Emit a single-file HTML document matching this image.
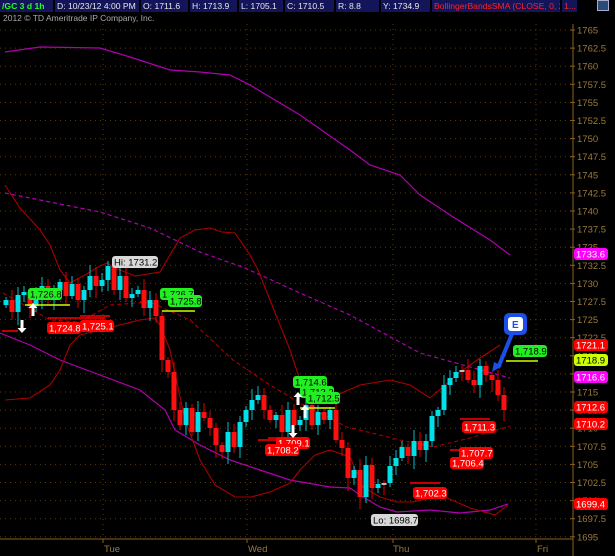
<!DOCTYPE html>
<html><head><meta charset="utf-8">
<style>
html,body{margin:0;padding:0;background:#000;width:615px;height:556px;overflow:hidden;font-family:"Liberation Sans",sans-serif;}
#hdr{position:absolute;left:0;top:0;width:615px;height:13px;background:#000;}
.c{position:absolute;top:0;height:12px;background:#14145a;color:#e6e6e6;font-size:8.6px;line-height:12px;white-space:nowrap;overflow:hidden;padding-left:2px;box-sizing:border-box;}
svg{position:absolute;left:0;top:0}
</style></head><body>
<div id="hdr">
<div class="c" style="left:0;width:53px;color:#2f2;font-weight:bold">/GC 3 d 1h</div>
<div class="c" style="left:55px;width:84px">D: 10/23/12 4:00 PM</div>
<div class="c" style="left:141px;width:47px">O: 1711.6</div>
<div class="c" style="left:190px;width:47px">H: 1713.9</div>
<div class="c" style="left:239px;width:44px">L: 1705.1</div>
<div class="c" style="left:285px;width:49px">C: 1710.5</div>
<div class="c" style="left:336px;width:43px">R: 8.8</div>
<div class="c" style="left:381px;width:49px">Y: 1734.9</div>
<div class="c" style="left:432px;width:128px;color:#f22">BollingerBandsSMA (CLOSE, 0, 25, -2.0, 2.0)</div>
<div class="c" style="left:562px;width:15px;color:#f22">1...</div>
<div class="c" style="left:597px;width:12px;height:11px;background:#2a4a7a;border:1px solid #aac"></div>
</div>
<div style="position:absolute;left:3px;top:13px;color:#aaa;font-size:8.5px">2012 © TD Ameritrade IP Company, Inc.</div>
<svg id="s" width="615" height="556" style="top:0"></svg>
<script>
var s='';
function Y(p){return 30+(1765-p)*7.24;}
for(var k=0;k<=28;k++){var p=1765-k*2.5,y=Y(p);
 s+='<line x1="0" x2="573" y1="'+y+'" y2="'+y+'" stroke="#5a3a0a" stroke-dasharray="1,4"/>';
 s+='<line x1="570" x2="575" y1="'+y+'" y2="'+y+'" stroke="#8a6020"/>';
 s+='<text x="577" y="'+(y+3.5)+'" fill="#9a7a3a" font-size="9.5" font-family="Liberation Sans">'+p+'</text>';}
[103,247,393,536].forEach(function(x){s+='<line x1="'+x+'" x2="'+x+'" y1="24" y2="539" stroke="#5a3a0a" stroke-dasharray="1,4"/>';
 s+='<line x1="'+x+'" x2="'+x+'" y1="539" y2="543" stroke="#8a6020"/>';});
s+='<line x1="573" x2="573" y1="24" y2="556" stroke="#8a6020"/>';
s+='<line x1="0" x2="573" y1="539" y2="539" stroke="#8a6020"/>';
[['Tue',104],['Wed',248],['Thu',393],['Fri',537]].forEach(function(d){s+='<text x="'+d[1]+'" y="552" fill="#9a7a3a" font-size="9.5" font-family="Liberation Sans">'+d[0]+'</text>';});
function pl(pts,col,w,dash){s+='<polyline fill="none" stroke="'+col+'" stroke-width="'+w+'" '+(dash?'stroke-dasharray="'+dash+'"':'')+' points="'+pts+'"/>';}
pl("5,52 40,47 100,48 130,57 170,70 200,72 230,75 250,85 300,115 350,150 370,165 400,175 420,195 450,215 490,240 510,255","#b000b0",1.2);
pl("5,193 100,212 150,228 200,252 245,268 300,293 350,315 420,353 470,367 510,378","#b000b0",1.2,"4,3");
pl("0,333 30,345 60,360 100,375 140,390 165,410 175,430 200,445 230,460 260,470 290,480 330,487 350,488 363,497 380,507 397,512 430,510 460,513 490,510 508,504","#b000b0",1.2);
pl("5,185 20,208 40,230 50,245 60,270 70,283 85,275 100,266 107,263 115,268 135,276 160,272 170,255 180,238 195,230 210,228 222,232 235,233 250,255 258,270 270,300 290,350 300,380 315,392 330,398 360,385 390,380 410,385 430,398 445,385 460,372 480,358 500,345","#aa0000",1.1);
pl("5,400 30,398 50,385 60,370 70,345 80,335 100,330 120,325 140,320 155,318 160,325 170,350 185,420 200,460 215,485 235,497 251,497 270,492 290,483 300,470 315,455 330,450 350,457 363,487 380,497 397,502 413,502 430,498 445,497 470,508 495,515 508,505","#aa0000",1.1);
pl("3,293 50,320 80,322 110,305 150,302 190,320 233,360 270,385 300,403 347,427 400,440 433,447 470,438 510,426","#aa0000",1.1,"4,3");
var cl=[300,312,295,292,306,298,286,300,290,282,296,284,300,290,276,286,
280,266,290,276,298,294,290,308,300,316,
360,372,410,425,408,432,412,
418,428,445,452,432,447,
422,410,400,395,410,420,
415,432,410,425,420,405,425,412,420,410,
440,448,478,470,497,465,488,484,
483,466,458,447,456,441,450,441,416,410,385,
378,372,370,380,385,366,375,380,395,410];
var prev=305;
for(var i=0;i<cl.length;i++){var x=6+6*i,o=prev,c=cl[i];var t=Math.min(o,c),b=Math.max(o,c);if(b-t<2){b=t+2;}
 var col=c<o?'#00e0e8':'#ff1010'; if(Math.abs(c-o)<3)col='#bbbbbb';
 var hi=t-3-((i*7)%9),lo=b+3+((i*5)%11);
 s+='<line x1="'+x+'" x2="'+x+'" y1="'+hi+'" y2="'+lo+'" stroke="'+(col=='#00e0e8'?'#00c0c8':'#d00')+'"/>';
 s+='<rect x="'+(x-2.5)+'" y="'+t+'" width="5" height="'+(b-t)+'" fill="'+col+'"/>';prev=c;}
[[2,18,331,'#f00'],[48,105,318,'#f00'],[80,110,316,'#f00'],[25,70,305,'#cf0'],[162,195,311,'#cf0'],[268,305,438,'#f00'],[258,290,440,'#f00'],[300,335,408,'#cf0'],[460,490,419,'#f00'],[450,465,450,'#f00'],[410,440,483,'#f00'],[506,538,361,'#cf0']].forEach(function(h){s+='<line x1="'+h[0]+'" x2="'+h[1]+'" y1="'+h[2]+'" y2="'+h[2]+'" stroke="'+h[3]+'" stroke-width="1.5"/>';});
function tag(x,y,t,bg,fg,w){s+='<rect x="'+x+'" y="'+(y-6)+'" width="'+(w||34)+'" height="12" rx="3" fill="'+bg+'"/><text x="'+(x+2)+'" y="'+(y+3.5)+'" fill="'+fg+'" font-size="9.5" font-family="Liberation Sans">'+t+'</text>';}
tag(112,262,'Hi: 1731.2','#d8d8d8','#000',46);
tag(28,294,'1,726.8','#22ee22','#000');
tag(47,328,'1,724.8','#f00','#fff');
tag(80,326,'1,725.1','#f00','#fff');
tag(160,294,'1,726.7','#22ee22','#000');
tag(168,301,'1,725.8','#22ee22','#000');
tag(293,382,'1,714.6','#22ee22','#000');
tag(300,392,'1,713.2','#22ee22','#000');
tag(306,398,'1,712.5','#22ee22','#000');
tag(276,443,'1,709.1','#f00','#fff');
tag(265,450,'1,708.2','#f00','#fff');
tag(462,427,'1,711.3','#f00','#fff');
tag(459,453,'1,707.7','#f00','#fff');
tag(450,463,'1,706.4','#f00','#fff');
tag(413,493,'1,702.3','#f00','#fff');
tag(371,520,'Lo: 1698.7','#d8d8d8','#000',47);
tag(513,351,'1,718.9','#22ee22','#000');
tag(574,254,'1733.6','#ff00ff','#fff');
tag(574,345,'1721.1','#f00','#fff');
tag(574,360,'1718.9','#ccff00','#000');
tag(574,377,'1716.6','#ff00ff','#fff');
tag(574,407,'1712.6','#f00','#fff');
tag(574,424,'1710.2','#f00','#fff');
tag(574,504,'1699.4','#f00','#fff');
function arr(x,y,up){var d=up?-1:1;s+='<path d="M'+(x-1.5)+' '+y+' v'+(8*d)+' h-3 l4.5 '+(5*d)+' l4.5 '+(-5*d)+' h-3 v'+(-8*d)+'z" fill="#fff"/>';}
arr(22,320,false);arr(33,316,true);arr(293,425,false);arr(305,418,true);arr(298,405,true);
s+='<line x1="512" y1="334" x2="498" y2="368" stroke="#1a4fe8" stroke-width="4"/><path d="M492 372 l2-10 8 4z" fill="#1a4fe8"/>';
s+='<rect x="504" y="313" width="23" height="22" rx="5" fill="#1a4fe8"/><rect x="508" y="317" width="15" height="14" rx="3" fill="#fff"/><text x="512" y="328" fill="#1a4fe8" font-size="10" font-weight="bold" font-family="Liberation Sans">E</text>';
document.getElementById('s').innerHTML=s;
</script>
</body></html>
